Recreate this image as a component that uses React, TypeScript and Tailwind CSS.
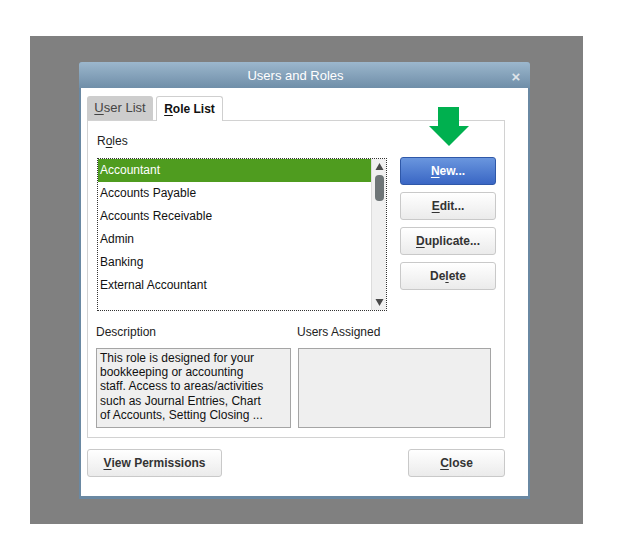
import React from 'react';

const roles = ['Accountant', 'Accounts Payable', 'Accounts Receivable', 'Admin', 'Banking', 'External Accountant'];

const descLines = [
    'This role is designed for your',
    'bookkeeping or accounting',
    'staff. Access to areas/activities',
    'such as Journal Entries, Chart',
    'of Accounts, Setting Closing ...',
];

const font = { fontFamily: '"Liberation Sans", Arial, sans-serif' };

// label with one underlined mnemonic letter
const Mn: React.FC<{ text: string; at: number }> = ({ text, at }) => (
    <>
        {text.slice(0, at)}
        <span className="underline underline-offset-2">{text[at]}</span>
        {text.slice(at + 1)}
    </>
);

const GrayButton: React.FC<{ children: React.ReactNode; className?: string }> = ({ children, className }) => (
    <div
        className={`flex items-center justify-center h-[28px] rounded-[3px] border border-[#c9c9c9] bg-gradient-to-b from-[#ffffff] to-[#ebebeb] text-[12px] font-bold text-[#333] ${className ?? ''}`}
    >
        {children}
    </div>
);

export default function App() {
    return (
        <div className="w-[617px] h-[556px] bg-white pt-[36px] pl-[30px]" style={font}>
            <div className="w-[553px] h-[488px] bg-[#808080] pt-[26px] pl-[49px]">
                {/* dialog */}
                <div className="relative w-[451px] h-[437px] bg-[#6a88a2] rounded-t-[3px] flex flex-col">
                    <div className="h-[26px] flex items-center pt-[2px] rounded-t-[3px] bg-gradient-to-b from-[#9cb7cd] to-[#6f8ea8]">
                        <div className="flex-1 text-center text-[13px] text-white pl-[6px]">Users and Roles</div>
                        <div className="w-[20px] mr-[4px] text-center text-[15px] font-bold text-[#dfe4e9] leading-none">×</div>
                    </div>

                    <div className="mx-[2px] mb-[3px] flex-1 bg-white pl-[6px] pt-[8px]">
                        {/* tabs */}
                        <div className="flex items-end h-[24px] gap-[3px]">
                            <div className="h-[24px] w-[66px] flex items-center justify-center rounded-t-[3px] bg-[#cdcdcd] text-[13px] text-[#444]">
                                <Mn text="User List" at={0} />
                            </div>
                            <div className="h-[25px] w-[67px] flex items-center justify-center rounded-t-[3px] border border-b-0 border-[#cfcfcf] bg-white text-[12px] font-bold text-[#111] relative top-[1px]">
                                <Mn text="Role List" at={0} />
                            </div>
                        </div>

                        {/* tab panel */}
                        <div className="w-[418px] h-[318px] border border-[#d2d2d2] pl-[9px] pt-[13px]">
                            <div className="text-[12px] text-[#222] leading-[14px]">
                                R<span className="underline underline-offset-2">o</span>les
                            </div>
                            <div className="flex mt-[10px]">
                                {/* listbox */}
                                <div className="w-[290px] h-[153px] border border-dotted border-[#333] flex">
                                    <div className="flex-1">
                                        {roles.map((r, i) => (
                                            <div
                                                key={r}
                                                className={`h-[23px] flex items-center pl-[2px] pb-[2px] text-[12px] ${i === 0 ? 'bg-[#4f9c1f] text-white' : 'text-[#111]'}`}
                                            >
                                                {r}
                                            </div>
                                        ))}
                                    </div>
                                    <div className="w-[15px] bg-[#f0f0f0] border-l border-[#dcdcdc] flex flex-col items-center">
                                        <svg width="9" height="16" viewBox="0 0 9 16">
                                            <path d="M4.5 4 L8.5 11 L0.5 11 Z" fill="#4a4a4a" />
                                        </svg>
                                        <div className="w-[9px] h-[26px] rounded-[4px] bg-[#6e7577]" />
                                        <div className="flex-1" />
                                        <svg width="9" height="16" viewBox="0 0 9 16">
                                            <path d="M0.5 5 L8.5 5 L4.5 12 Z" fill="#4a4a4a" />
                                        </svg>
                                    </div>
                                </div>

                                {/* action buttons */}
                                <div className="ml-[13px] -mt-[1px] w-[96px] flex flex-col gap-[7px]">
                                    <div className="h-[28px] flex items-center justify-center rounded-[3px] border border-[#2f58a8] bg-gradient-to-b from-[#6a96de] to-[#3a66c4] text-[12px] font-bold text-white">
                                        <Mn text="New..." at={0} />
                                    </div>
                                    <GrayButton><Mn text="Edit..." at={0} /></GrayButton>
                                    <GrayButton><Mn text="Duplicate..." at={0} /></GrayButton>
                                    <GrayButton><Mn text="Delete" at={2} /></GrayButton>
                                </div>
                            </div>

                            <div className="flex mt-[14px] -ml-[1px] text-[12px] text-[#222] leading-[14px]">
                                <div className="w-[201px]">Description</div>
                                <div>Users Assigned</div>
                            </div>
                            <div className="flex mt-[9px] -ml-[1px] gap-[7px]">
                                <div className="w-[195px] h-[80px] bg-[#efefef] border border-[#a5a5a5] px-[3px] pt-[2px] text-[12px] leading-[14.2px] text-[#111]">
                                    {descLines.map(l => (
                                        <div key={l} className="whitespace-nowrap">{l}</div>
                                    ))}
                                </div>
                                <div className="w-[193px] h-[80px] bg-[#efefef] border border-[#a5a5a5]" />
                            </div>
                        </div>

                        {/* bottom buttons */}
                        <div className="flex justify-between w-[418px] mt-[11px]">
                            <GrayButton className="w-[135px]"><Mn text="View Permissions" at={0} /></GrayButton>
                            <GrayButton className="w-[97px]"><Mn text="Close" at={0} /></GrayButton>
                        </div>
                    </div>

                    {/* annotation arrow */}
                    <svg className="absolute left-[350px] top-[45px]" width="40" height="39" viewBox="0 0 40 39">
                        <path d="M9 0 H30 V19 H40 L20 39 L0 19 H9 Z" fill="#00b04f" />
                    </svg>
                </div>
            </div>
        </div>
    );
}
